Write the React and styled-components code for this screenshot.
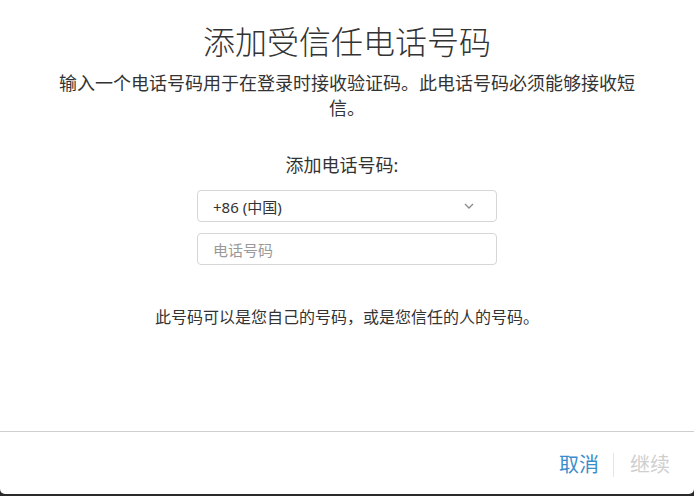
import React from 'react';
import styled, { createGlobalStyle } from 'styled-components';

const GlobalStyle = createGlobalStyle`
  html, body {
    margin: 0;
    padding: 0;
    background: #2a2a2a;
  }
  body {
    font-family: "Noto Sans", "Noto Sans CJK SC", sans-serif;
    color: #333;
  }
`;

const Modal = styled.div`
  width: 694px;
  height: 494px;
  background: #fff;
  border-radius: 0 0 5px 5px;
  display: flex;
  flex-direction: column;
  overflow: hidden;
`;

const Content = styled.div`
  flex: 1;
  display: flex;
  flex-direction: column;
  align-items: center;
  text-align: center;
  padding-top: 22px;
`;

const Title = styled.h1`
  margin: 0;
  font-size: 32px;
  line-height: 40px;
  font-weight: 300;
  color: #333;
`;

const Intro = styled.p`
  margin: 8.5px 0 0;
  width: 590px;
  font-size: 18px;
  line-height: 25px;
  color: #333;
`;

const Label = styled.div`
  margin-top: 32.5px;
  padding-right: 10px;
  font-size: 18px;
  line-height: 24px;
  color: #333;
`;

const Field = styled.div`
  box-sizing: border-box;
  width: 300px;
  height: 32px;
  margin-top: ${(p) => p.gap}px;
  border: 1px solid #d6d6d6;
  border-radius: 4px;
  display: flex;
  align-items: center;
  justify-content: space-between;
  padding: 0 22px 0 15px;
  font-size: 15px;
  color: ${(p) => (p.placeholder ? '#999' : '#333')};
`;

const Note = styled.p`
  margin: 40px 0 0;
  font-size: 16px;
  line-height: 24px;
  color: #333;
`;

const Footer = styled.div`
  height: 63px;
  border-top: 1px solid #cfcfcf;
  display: flex;
  justify-content: flex-end;
  align-items: center;
  padding: 4px 24px 0 0;
  box-sizing: border-box;
`;

const Action = styled.span`
  font-size: 20px;
  line-height: 26px;
  color: ${(p) => (p.disabled ? '#cfcfcf' : '#3a8dcb')};
`;

const Split = styled.span`
  width: 1px;
  height: 24px;
  background: #e6e6e6;
  margin: 0 16px 0 14px;
`;

const Chevron = () => (
  <svg width="10" height="6" viewBox="0 0 10 6" fill="none">
    <path d="M1 1l4 4 4-4" stroke="#8a8a8a" strokeWidth="1.3" />
  </svg>
);

export default function App() {
  return (
    <>
      <GlobalStyle />
      <Modal>
        <Content>
          <Title>添加受信任电话号码</Title>
          <Intro>输入一个电话号码用于在登录时接收验证码。此电话号码必须能够接收短信。</Intro>
          <Label>添加电话号码:</Label>
          <Field gap={13}>
            <span>+86 (中国)</span>
            <Chevron />
          </Field>
          <Field gap={11} placeholder>
            <span>电话号码</span>
          </Field>
          <Note>此号码可以是您自己的号码，或是您信任的人的号码。</Note>
        </Content>
        <Footer>
          <Action>取消</Action>
          <Split />
          <Action disabled>继续</Action>
        </Footer>
      </Modal>
    </>
  );
}
